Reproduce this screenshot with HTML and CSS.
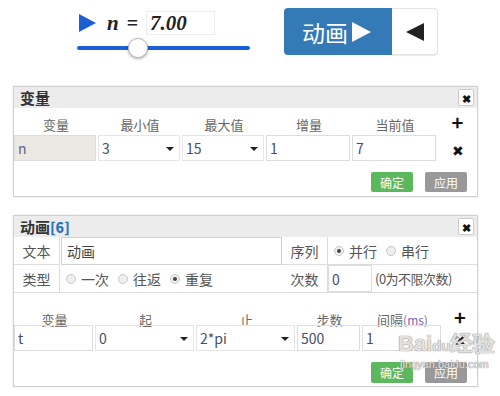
FILE: index.html
```html
<!DOCTYPE html>
<html lang="zh">
<head>
<meta charset="utf-8">
<link rel="stylesheet" href="styles.css">
</head>
<body>
<div class="top">
  <div class="ctrl">
    <div class="ctrl-row">
      <span class="play"></span>
      <span class="var">n</span><span class="eq">=</span>
      <span class="valbox">7.00</span>
    </div>
    <div class="slider"><span class="thumb"></span></div>
  </div>
  <div class="anim-btns">
    <div class="btn-play">动画<span class="tri-r"></span></div>
    <div class="btn-back"><span class="tri-l"></span></div>
  </div>
</div>

<div class="panel p1">
  <div class="phead"><span>变量</span><span class="close">✖</span></div>
  <div class="grid g1 colhead">
    <span>变量</span><span>最小值</span><span>最大值</span><span>增量</span><span>当前值</span><span class="plus">+</span>
  </div>
  <div class="grid g1 inrow">
    <span class="cell"><span class="box ro">n</span></span>
    <span class="cell"><span class="box sel">3<i class="arr"></i></span></span>
    <span class="cell"><span class="box sel">15<i class="arr"></i></span></span>
    <span class="cell"><span class="box">1</span></span>
    <span class="cell"><span class="box">7</span></span>
    <span class="del">✖</span>
  </div>
  <div class="btnrow"><span class="btn ok">确定</span><span class="btn apply">应用</span></div>
</div>

<div class="panel p2">
  <div class="phead"><span>动画<b class="num">[6]</b></span><span class="close">✖</span></div>
  <div class="form">
    <span class="lbl">文本</span>
    <span class="fin">动画</span>
    <span class="lbl">序列</span>
    <span class="radios"><span class="rd"><i class="dot on"></i>并行</span><span class="rd"><i class="dot"></i>串行</span></span>
    <span class="lbl">类型</span>
    <span class="radios"><span class="rd"><i class="dot"></i>一次</span><span class="rd"><i class="dot"></i>往返</span><span class="rd"><i class="dot on"></i>重复</span></span>
    <span class="lbl">次数</span>
    <span class="cnt"><span class="cin">0</span><span class="hint">(0为不限次数)</span></span>
  </div>
  <div class="grid g2 colhead ch2">
    <span>变量</span><span>起</span><span>止</span><span>步数</span><span>间隔<em>(ms)</em></span><span class="plus">+</span>
  </div>
  <div class="grid g2 inrow">
    <span class="cell"><span class="box">t</span></span>
    <span class="cell"><span class="box sel">0<i class="arr"></i></span></span>
    <span class="cell"><span class="box sel">2*pi<i class="arr"></i></span></span>
    <span class="cell"><span class="box">500</span></span>
    <span class="cell"><span class="box">1</span></span>
    <span class="del">✖</span>
  </div>
  <div class="btnrow"><span class="btn ok">确定</span><span class="btn apply">应用</span></div>
</div>

<div class="wm"><span class="wm1">Bai<span class="paw">du</span>经验</span><span class="wm2">jingyan.baidu.com</span></div>
</body>
</html>
```

FILE: styles.css
```css
* { box-sizing: border-box; margin: 0; padding: 0; }
body {
  width: 500px; height: 396px; overflow: hidden; position: relative;
  background: #fff; color: #333;
  font-family: "Noto Sans CJK SC", "Liberation Sans", sans-serif;
}
.top { height: 86px; display: flex; padding: 8px 0 0 77px; }
.ctrl { width: 173px; padding-top: 3px; }
.ctrl-row { display: flex; align-items: center; height: 24px; }
.play {
  width: 0; height: 0; margin: 0 11px 0 2px;
  border-left: 17px solid #1a5fd4;
  border-top: 9px solid transparent; border-bottom: 9px solid transparent;
}
.var { font: italic bold 21px "Liberation Serif", serif; color: #222; }
.eq { font: bold 20px "Liberation Serif", serif; color: #222; margin: 0 8px; }
.valbox {
  width: 69px; height: 24px; border: 1px solid #eee; padding-left: 3px;
  font: italic bold 21px/22px "Liberation Serif", serif; color: #222;
}
.slider { position: relative; height: 4px; margin-top: 11px; background: #1a5fd4; border-radius: 2px; }
.thumb {
  position: absolute; left: 51px; top: -8px; width: 20px; height: 20px;
  border-radius: 50%; background: #fff; border: 1px solid #bbb;
  box-shadow: 0 1px 3px rgba(0,0,0,.35);
}
.anim-btns { display: flex; margin-left: 34px; height: 47px; }
.btn-play {
  width: 108px; background: #337ab7; color: #fff; border-radius: 4px 0 0 4px;
  display: flex; align-items: center; padding-left: 18px; font-size: 23px; gap: 4px;
}
.tri-r { width: 0; height: 0; border-left: 19px solid #fff; border-top: 10px solid transparent; border-bottom: 10px solid transparent; }
.btn-back {
  width: 46px; border: 1px solid #e2e2e2; border-left: none; border-radius: 0 4px 4px 0;
  display: flex; align-items: center; justify-content: center;
  box-shadow: 0 1px 1px rgba(0,0,0,.08);
}
.tri-l { width: 0; height: 0; border-right: 18px solid #222; border-top: 9px solid transparent; border-bottom: 9px solid transparent; }

.panel {
  margin-left: 13px; width: 465px; border: 1px solid #d0d0d0;
  box-shadow: 0 0 2px rgba(0,0,0,.12);
}
.p2 { margin-top: 18px; }
.phead {
  height: 21px; background: #ececec; display: flex; align-items: center;
  justify-content: space-between; padding: 0 3px 0 6px;
  font-weight: bold; font-size: 15px; color: #333;
}
.num { color: #2a72c0; font-size: 14px; }
.close {
  width: 16px; height: 17px; background: #fff; border: 1px solid #ccc; border-radius: 2px;
  display: flex; align-items: center; justify-content: center; font-size: 11px; color: #111;
}
.grid { display: grid; }
.g1 { grid-template-columns: 84px 84px 84px 86px 86px 39px; }
.g2 { grid-template-columns: 81px 101px 101px 65px 81px 34px; }
.colhead { height: 27px; align-items: end; font-size: 13px; color: #666; text-align: center; padding-bottom: 1px; }
.colhead em { font-style: normal; color: #7a68a8; font-size: 12px; }
.ch2 { height: 32px; margin-top: 0; padding-top: 12px; }
.plus { font-size: 20px; font-weight: bold; color: #111; line-height: 24px; }
.inrow { height: 27px; }
.cell { padding: 0 2px 1px 0; }
.box {
  display: flex; align-items: center; height: 100%; border: 1px solid #ddd;
  padding-left: 3px; font-size: 14px; color: #44506a; position: relative;
}
.ro { background: #ebe9e4; color: #6a5f80; }
.sel { border-color: #e6e6e6; }
.arr {
  position: absolute; right: 5px; top: 11px; width: 0; height: 0;
  border-top: 4px solid #222; border-left: 4px solid transparent; border-right: 4px solid transparent;
}
.del { display: flex; align-items: flex-end; justify-content: center; font-size: 14px; color: #111; padding-bottom: 2px; }
.btnrow { display: flex; justify-content: flex-end; gap: 12px; padding: 10px 10px 4px 0; }
.p2 .btnrow { padding-bottom: 3px; }
.btn {
  width: 42px; height: 20px; color: #fff; font-size: 12px; border-radius: 2px;
  display: flex; align-items: center; justify-content: center;
}
.p2 .btn { height: 21px; }
.ok { background: #5cb85c; }
.apply { background: #999; }

.form { display: grid; grid-template-columns: 46px 222px 46px 149px; grid-auto-rows: 28px; }
.form > span { border-bottom: 1px solid #ddd; display: flex; align-items: center; }
.lbl { border-right: 1px solid #ddd; justify-content: center; font-size: 14px; color: #555; }
.fin { border: 1px solid #d0d0d0 !important; padding-left: 5px; font-size: 14px; color: #444; margin-left: 1px; }
.radios { gap: 9px; padding-left: 6px; font-size: 14px; color: #555; }
.rd { display: flex; align-items: center; gap: 5px; }
.dot {
  width: 10px; height: 10px; border-radius: 50%; border: 1px solid #c8c8c8;
  background: #eee; position: relative;
}
.dot.on::after {
  content: ""; position: absolute; left: 2px; top: 2px; width: 4px; height: 4px;
  border-radius: 50%; background: #444;
}
.cnt { gap: 3px; }
.cin {
  width: 44px; height: 100%; border: 1px solid #ddd; display: flex; align-items: center;
  padding-left: 3px; font-size: 14px; color: #44506a;
}
.hint { font-size: 13px; color: #555; letter-spacing: -0.5px; white-space: nowrap; }

.wm {
  position: absolute; left: 398px; top: 332px; display: flex; flex-direction: column;
  color: rgba(255,255,255,.75); text-shadow: 0 0 1px #888, 0 0 1px #888;
  pointer-events: none;
}
.wm1 { font: bold 22px/24px "Liberation Sans", sans-serif; }
.paw { font-size: 15px; }
.wm2 { font: 11px/12px "Liberation Sans", sans-serif; margin-left: 2px; }
```
